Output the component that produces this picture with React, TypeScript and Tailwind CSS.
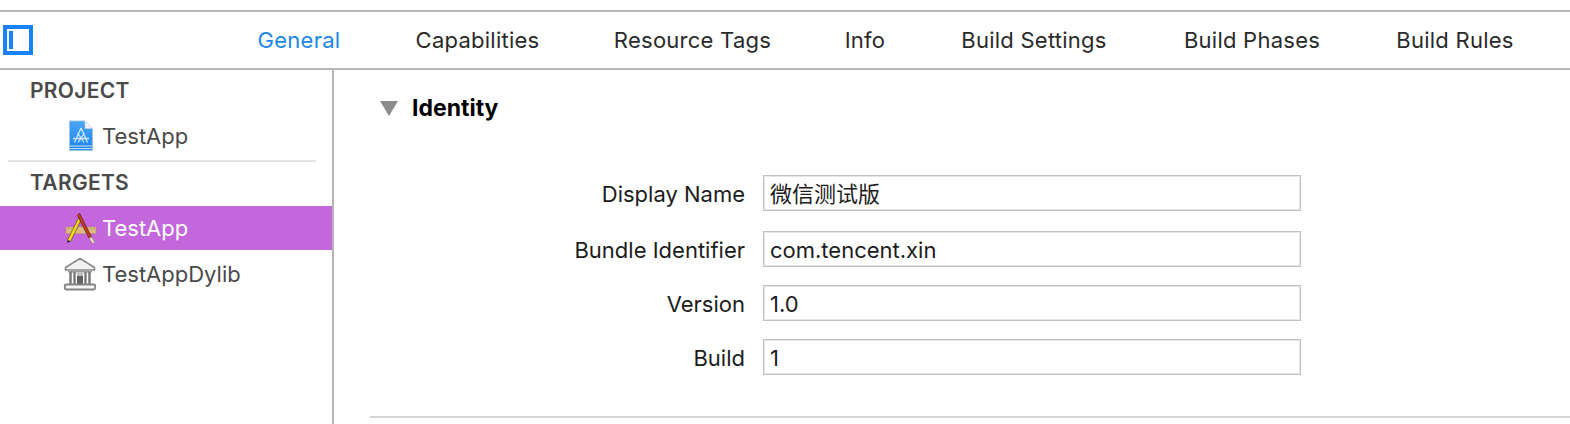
const tabs = [
  { name: 'General', width: 'w-[80px]' },
  { name: 'Capabilities', width: 'w-[123px]' },
  { name: 'Resource Tags', width: 'w-[153px]' },
  { name: 'Info', width: 'w-[38px]' },
  { name: 'Build Settings', width: 'w-[146px]' },
  { name: 'Build Phases', width: 'w-[136px]' },
  { name: 'Build Rules', width: 'w-[116px]' },
]

const fields = [
  { label: 'Display Name', value: '微信测试版', mt: 'mt-0' },
  { label: 'Bundle Identifier', value: 'com.tencent.xin', mt: 'mt-[20px]' },
  { label: 'Version', value: '1.0', mt: 'mt-[18px]' },
  { label: 'Build', value: '1', mt: 'mt-[18px]' },
]

function ProjectFileIcon() {
  return (
    <svg width="26" height="32" viewBox="0 0 26 32" className="shrink-0">
      <defs>
        <linearGradient id="fileBlue" x1="0" y1="0" x2="0" y2="1">
          <stop offset="0" stopColor="#4aa6f6" />
          <stop offset="1" stopColor="#1b84ee" />
        </linearGradient>
      </defs>
      <path d="M1.5 1 H17 L24.5 8.5 V30.5 H1.5 Z" fill="url(#fileBlue)" stroke="#9cc3e2" strokeWidth="1" />
      <path d="M17 1 V8.5 H24.5 Z" fill="#f2f6fa" stroke="#c4d4e2" strokeWidth="0.6" />
      <path d="M2 26 H24 M2 28.6 H24" stroke="#e2f1fd" strokeWidth="0.9" />
      <path d="M13 8 L6.5 22.5 M13 8 L19.5 22.5 M5 18.5 H21 M9.5 13 L16 22.5 M16.5 13 L10 22.5" stroke="#cfe6fb" strokeWidth="1.3" fill="none" />
    </svg>
  )
}

function AppTargetIcon() {
  return (
    <svg width="32" height="32" viewBox="0 0 32 32" className="shrink-0">
      <rect x="1" y="15" width="30" height="6.5" fill="#dcbc82" stroke="#b8955a" strokeWidth="0.5" />
      <path d="M3 16 V17.5 M6 16 V17.5 M9 16 V17.5 M12 16 V17.5 M20 16 V17.5 M23 16 V17.5 M26 16 V17.5 M29 16 V17.5" stroke="#8a6c3a" strokeWidth="0.6" />
      <path d="M13.5 6 L2.5 28 L5.5 29.5 L16 8 Z" fill="#f6d81f" stroke="#5f4a1e" strokeWidth="0.7" />
      <path d="M2.5 28 L2 31 L5.5 29.5 Z" fill="#3a2a4a" />
      <path d="M14.5 1 L26.5 25 L24 26.3 L12.5 3.5 Z" fill="#c43a22" stroke="#5c1e18" strokeWidth="0.7" />
      <path d="M24 26.3 L26.5 25 L30 30.4 L27.6 31.4 Z" fill="#eadcc2" stroke="#8d7c60" strokeWidth="0.5" />
    </svg>
  )
}

function LibraryIcon() {
  return (
    <svg width="34" height="34" viewBox="0 0 34 34" className="shrink-0">
      <path d="M17 1.5 L31.5 10.5 V13 H2.5 V10.5 Z" fill="#f1f1f1" stroke="#8a8a8a" strokeWidth="1.6" strokeLinejoin="round" />
      <rect x="5" y="13.5" width="24" height="2" fill="#9c9c9c" />
      <path d="M7.5 15 V27 M11.5 15 V27 M22.5 15 V27 M26.5 15 V27" stroke="#777777" strokeWidth="2.4" />
      <rect x="14" y="19" width="6" height="8" fill="#626262" />
      <rect x="14" y="15.5" width="6" height="3.5" fill="#bdbdbd" />
      <rect x="1.8" y="27.5" width="30.4" height="5" rx="1.5" fill="#f6f6f6" stroke="#848484" strokeWidth="1.8" />
    </svg>
  )
}

function SidebarToggle() {
  return (
    <div className="ml-[3px] h-[30px] w-[30px] border-[4px] border-[#1a82fb] bg-white pl-[2px] pt-[2px]">
      <div className="h-[18px] w-[4px] bg-[#1a82fb]" />
    </div>
  )
}

function Sidebar() {
  return (
    <aside className="h-[354px] w-[334px] shrink-0 border-r-2 border-[#b5b5b5] text-[#4a4a4a]">
      <div className="pl-[30px] pt-[8px] text-[21px] leading-[26px] font-semibold tracking-[0.3px]">PROJECT</div>
      <div className="mt-[14px] flex h-[36px] items-center pl-[68px]">
        <ProjectFileIcon />
        <span className="ml-[8px] text-[22px]">TestApp</span>
      </div>
      <div className="ml-[8px] mt-[6px] h-[2px] w-[308px] bg-[#e3e3e3]" />
      <div className="pl-[30px] pt-[8px] text-[21px] leading-[26px] font-semibold tracking-[0.3px]">TARGETS</div>
      <div className="mt-[10px] flex h-[44px] items-center bg-[#c466dc] pl-[65px] text-white">
        <AppTargetIcon />
        <span className="ml-[5px] text-[22px]">TestApp</span>
      </div>
      <div className="mt-[2px] flex h-[44px] items-center pl-[63px]">
        <LibraryIcon />
        <span className="ml-[5px] text-[22px]">TestAppDylib</span>
      </div>
    </aside>
  )
}

export default function App() {
  return (
    <div className="h-[424px] w-[1570px] overflow-hidden bg-white pt-[10px] font-['Inter','Noto_Sans_CJK_SC',sans-serif]">
      <header className="flex h-[60px] items-center border-y-2 border-[#b5b5b5]">
        <SidebarToggle />
        <nav className="ml-[226px] flex gap-[77px] text-[22px] tracking-[0.25px] text-[#2a2a2a]">
          {tabs.map(tab => (
            <span
              key={tab.name}
              className={`flex justify-center whitespace-nowrap ${tab.width} ${tab.name === 'General' ? 'text-[#1e88e5]' : ''}`}
            >
              {tab.name}
            </span>
          ))}
        </nav>
      </header>
      <div className="flex">
        <Sidebar />
        <main className="flex-1 pl-[36px]">
          <div className="flex items-center pl-[10px] pt-[25px]">
            <div className="h-0 w-0 border-x-[9px] border-t-[15px] border-x-transparent border-t-[#8c8c8c]" />
            <span className="ml-[14px] text-[23px] leading-[26px] font-bold text-black">Identity</span>
          </div>
          <div className="mt-[54px] w-[931px]">
            {fields.map(f => (
              <div key={f.label} className={`flex items-center ${f.mt}`}>
                <label className="w-[393px] pr-[18px] pt-[2px] text-right text-[22px] text-[#1c1c1c]">{f.label}</label>
                <div className="flex h-[36px] flex-1 items-center border border-[#c0c0c0] px-[6px] pt-[2px] text-[22px] text-[#1c1c1c] shadow-[inset_0_0_0_1px_#e6e6e6]">
                  {f.value}
                </div>
              </div>
            ))}
          </div>
          <div className="mt-[41px] h-[2px] bg-[#d4d4d4]" />
        </main>
      </div>
    </div>
  )
}
